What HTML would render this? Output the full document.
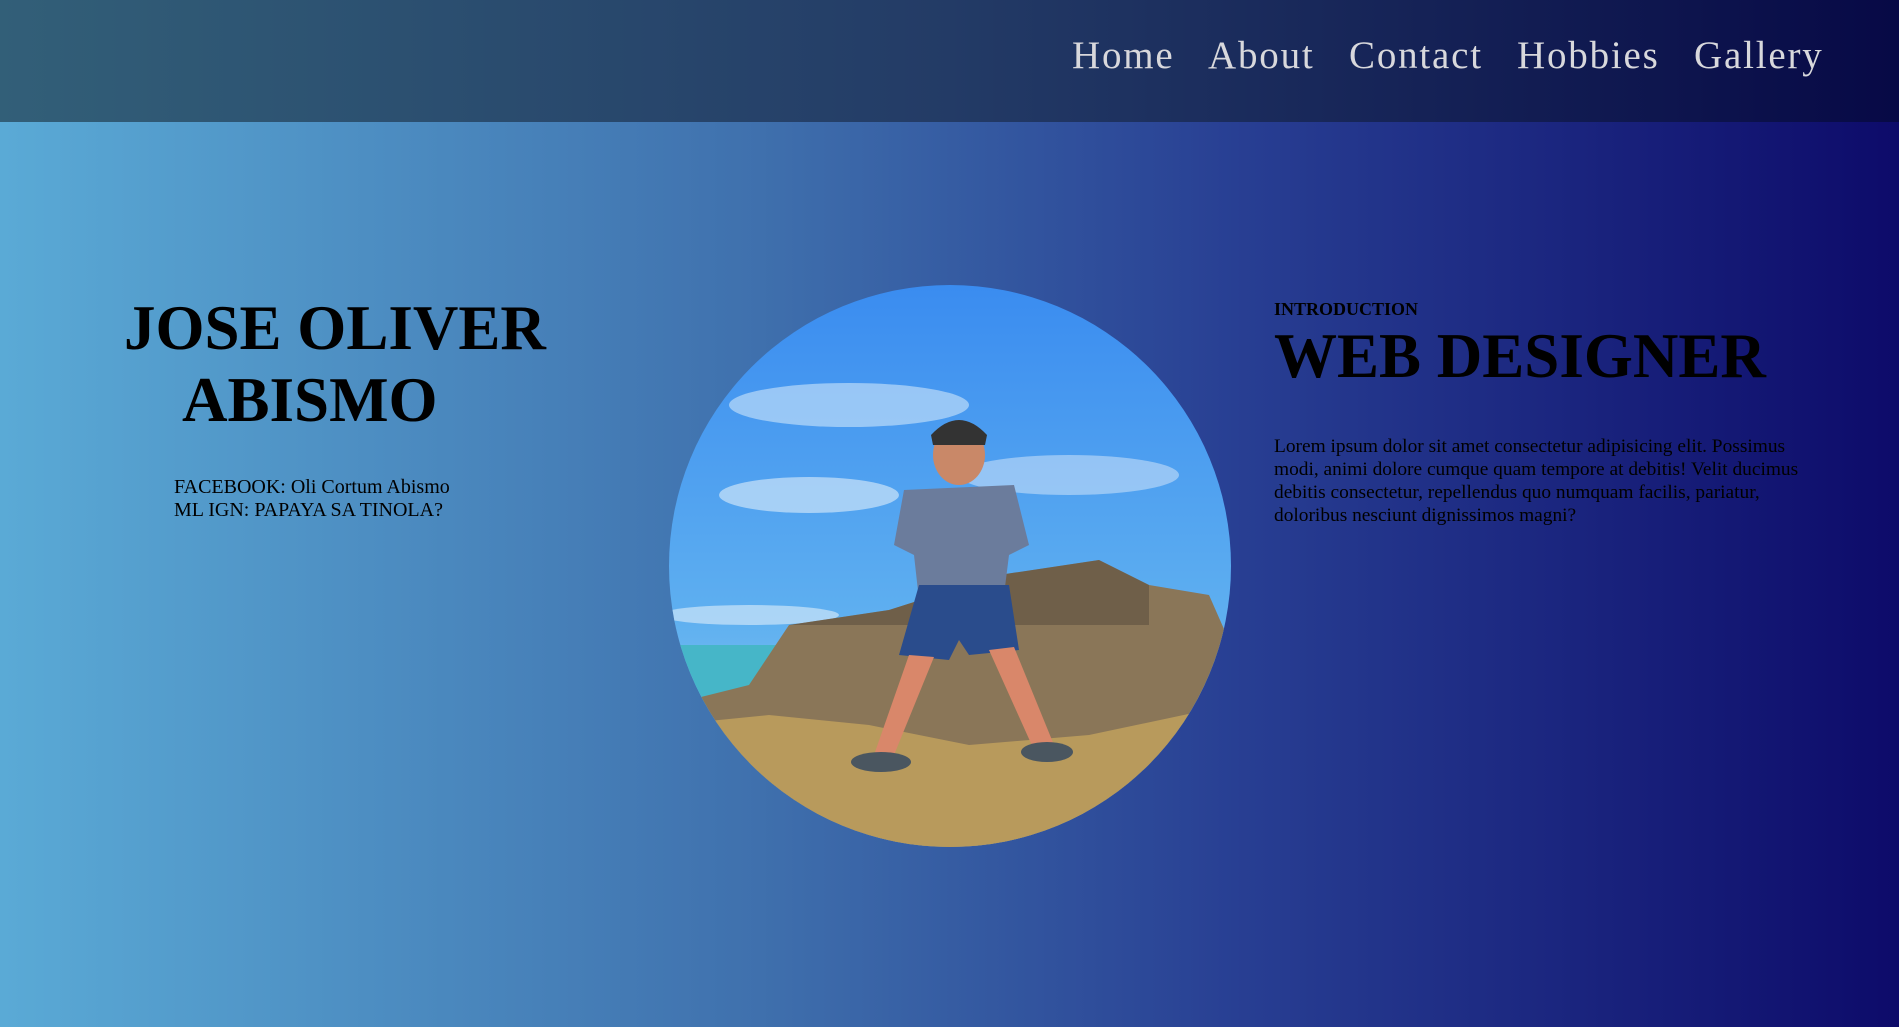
<!DOCTYPE html>
<html><head><meta charset="utf-8"><style>
*{margin:0;padding:0;box-sizing:border-box}
body{width:1899px;height:1027px;overflow:hidden;background:linear-gradient(90deg,#5aaad6 0%,#3f70ad 40%,#283f93 65%,#0d0b6a 100%);font-family:"Liberation Serif",serif;position:relative}
nav{position:absolute;left:0;top:0;width:1899px;height:122px;background:linear-gradient(90deg,#325f78 0%,#233b66 50%,#070946 100%)}
nav span{position:absolute;top:33px;font-size:39px;color:#d8d8dc;letter-spacing:1.8px;white-space:nowrap}
.a{position:absolute;white-space:nowrap;color:#000}
</style></head><body>
<nav>
<span style="left:1072px">Home</span>
<span style="left:1208px">About</span>
<span style="left:1349px">Contact</span>
<span style="left:1517px">Hobbies</span>
<span style="left:1694px">Gallery</span>
</nav>
<div class="a" style="left:124px;top:292px;font-size:63px;font-weight:bold">JOSE OLIVER</div>
<div class="a" style="left:182px;top:364px;font-size:63px;font-weight:bold">ABISMO</div>
<div class="a" style="left:174px;top:476px;font-size:20px;line-height:23px">FACEBOOK: Oli Cortum Abismo<br>ML IGN: PAPAYA SA TINOLA?</div>
<svg style="position:absolute;left:669px;top:285px" width="562" height="562" viewBox="0 0 562 562">
<defs><clipPath id="c"><circle cx="281" cy="281" r="281"/></clipPath>
<linearGradient id="s" x1="0" y1="0" x2="0" y2="1"><stop offset="0" stop-color="#3a8cf0"/><stop offset=".6" stop-color="#5fb0f0"/><stop offset="1" stop-color="#9fd4f0"/></linearGradient></defs>
<g clip-path="url(#c)">
<rect width="562" height="562" fill="url(#s)"/>
<ellipse cx="180" cy="120" rx="120" ry="22" fill="#cfe6fa" opacity=".6"/>
<ellipse cx="140" cy="210" rx="90" ry="18" fill="#e0eefa" opacity=".6"/>
<ellipse cx="400" cy="190" rx="110" ry="20" fill="#dbeafa" opacity=".5"/>
<ellipse cx="80" cy="330" rx="90" ry="10" fill="#e0eefa" opacity=".6"/>
<rect x="0" y="360" width="200" height="60" fill="#46b6c8"/>
<path d="M120 340 L220 325 L330 290 L430 275 L480 300 L540 310 L562 360 L562 562 L0 562 L0 420 L80 400 Z" fill="#8a7658"/>
<path d="M0 440 L100 430 L200 440 L300 460 L420 450 L562 420 L562 562 L0 562Z" fill="#b89a5c"/>
<path d="M120 340 L220 325 L330 290 L430 275 L480 300 L480 340 L300 340Z" fill="#5e5040" opacity=".6"/>
<ellipse cx="290" cy="170" rx="26" ry="30" fill="#c98868"/>
<path d="M262 150 Q290 120 318 150 L316 160 L264 160Z" fill="#333"/>
<path d="M235 205 L345 200 L360 260 L340 270 L335 310 L250 315 L245 270 L225 260Z" fill="#6b7c9c"/>
<path d="M250 300 L340 300 L350 365 L300 370 L290 355 L280 375 L230 370Z" fill="#2a4c8c"/>
<path d="M240 370 L265 372 L225 470 L205 470Z" fill="#d9876a"/>
<path d="M320 365 L345 362 L385 460 L365 465Z" fill="#d9876a"/>
<ellipse cx="212" cy="477" rx="30" ry="10" fill="#4a5660"/>
<ellipse cx="378" cy="467" rx="26" ry="10" fill="#4a5660"/>
</g></svg>
<div class="a" style="left:1274px;top:299px;font-size:18px;font-weight:bold">INTRODUCTION</div>
<div class="a" style="left:1274px;top:320px;font-size:63px;font-weight:bold">WEB DESIGNER</div>
<div class="a" style="left:1274px;top:435px;width:550px;white-space:normal;font-size:19.4px;line-height:23px">Lorem ipsum dolor sit amet consectetur adipisicing elit. Possimus modi, animi dolore cumque quam tempore at debitis! Velit ducimus debitis consectetur, repellendus quo numquam facilis, pariatur, doloribus nesciunt dignissimos magni?</div>
</body></html>
